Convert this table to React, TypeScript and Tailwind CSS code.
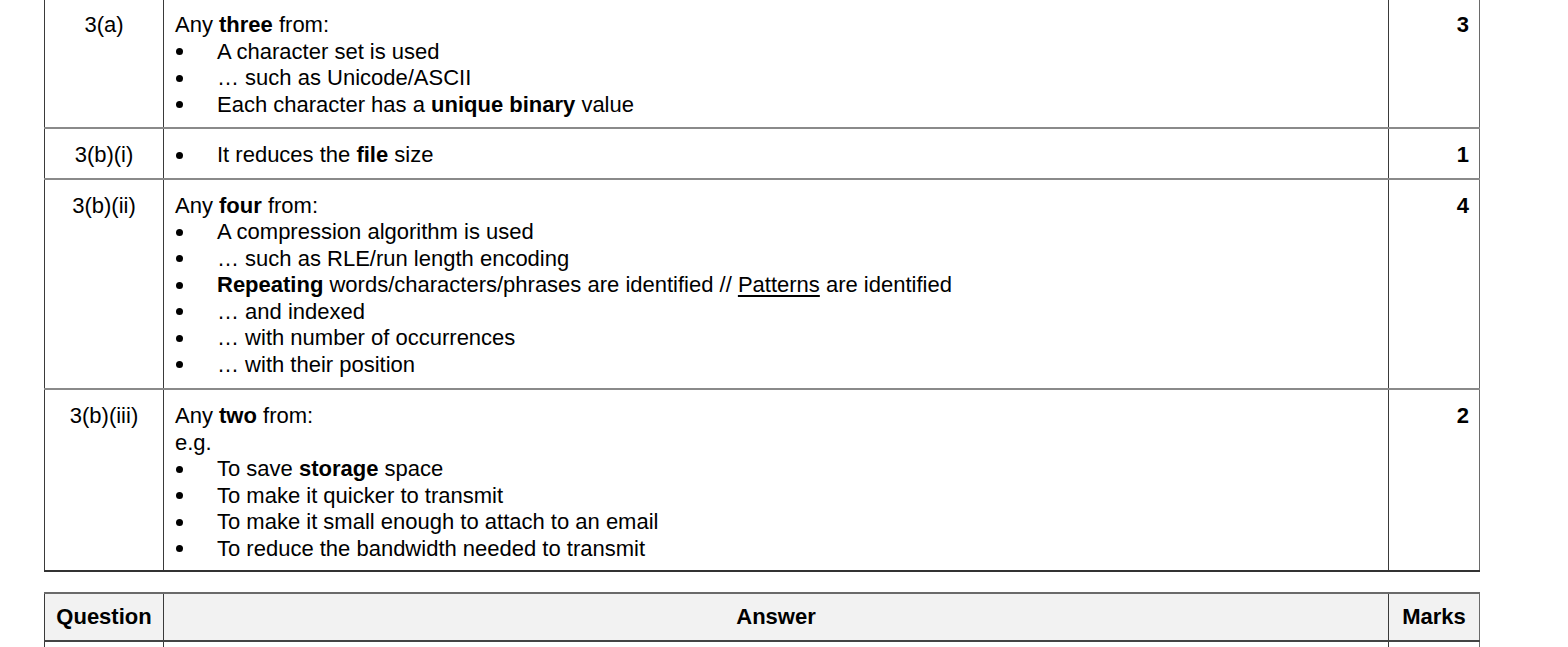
import type { ReactNode } from "react";

type Row = { q: string; marks: string; body: ReactNode; pb: string };

function Bullet({ children }: { children: ReactNode }) {
  return (
    <div className="flex">
      <span className="flex w-[42px] shrink-0 items-center pl-[1px]">
        <span className="block h-[7px] w-[7px] rounded-full bg-black" />
      </span>
      <span>{children}</span>
    </div>
  );
}

const rows: Row[] = [
  {
    q: "3(a)",
    marks: "3",
    pb: "pb-[9px]",
    body: (
      <>
        <div>
          Any <b>three</b> from:
        </div>
        <Bullet>A character set is used</Bullet>
        <Bullet>… such as Unicode/ASCII</Bullet>
        <Bullet>
          Each character has a <b>unique binary</b> value
        </Bullet>
      </>
    ),
  },
  {
    q: "3(b)(i)",
    marks: "1",
    pb: "pb-[9px]",
    body: (
      <Bullet>
        It reduces the <b>file</b> size
      </Bullet>
    ),
  },
  {
    q: "3(b)(ii)",
    marks: "4",
    pb: "pb-[10px]",
    body: (
      <>
        <div>
          Any <b>four</b> from:
        </div>
        <Bullet>A compression algorithm is used</Bullet>
        <Bullet>… such as RLE/run length encoding</Bullet>
        <Bullet>
          <b>Repeating</b> words/characters/phrases are identified // <u className="underline-offset-[3px]">Patterns</u> are identified
        </Bullet>
        <Bullet>… and indexed</Bullet>
        <Bullet>… with number of occurrences</Bullet>
        <Bullet>… with their position</Bullet>
      </>
    ),
  },
  {
    q: "3(b)(iii)",
    marks: "2",
    pb: "pb-[8px]",
    body: (
      <>
        <div>
          Any <b>two</b> from:
        </div>
        <div>e.g.</div>
        <Bullet>
          To save <b>storage</b> space
        </Bullet>
        <Bullet>To make it quicker to transmit</Bullet>
        <Bullet>To make it small enough to attach to an email</Bullet>
        <Bullet>To reduce the bandwidth needed to transmit</Bullet>
      </>
    ),
  },
];

export default function App() {
  return (
    <div className="h-[647px] overflow-hidden bg-white pl-[44px] font-['Liberation_Sans',Arial,sans-serif] text-[22px] leading-[26.5px] text-black">
      <div className="-mt-[3px] w-[1436px] border-t-2 border-[#8a8a8a]">
        {rows.map((r, i) => (
          <div
            key={r.q}
            className={`grid grid-cols-[120px_1225px_91px] border-b-2 ${
              i === rows.length - 1 ? "border-[#333]" : "border-[#8a8a8a]"
            }`}
          >
            <div className={`border-l border-r border-[#3a3a3a] pt-[13px] text-center ${r.pb}`}>{r.q}</div>
            <div className={`border-r border-[#3a3a3a] pt-[13px] pl-[11px] ${r.pb}`}>{r.body}</div>
            <div className={`border-r border-[#6a6a6a] pt-[13px] pr-[10px] text-right font-bold ${r.pb}`}>{r.marks}</div>
          </div>
        ))}
      </div>

      <div className="mt-[20px] w-[1436px] border-t-2 border-[#6a6a6a]">
        <div className="grid grid-cols-[120px_1225px_91px] border-b-2 border-[#444] bg-[#f2f2f2] font-bold">
          <div className="border-l border-r border-[#3a3a3a] pt-[10px] pb-[9px] text-center">Question</div>
          <div className="border-r border-[#3a3a3a] pt-[10px] pb-[9px] text-center">Answer</div>
          <div className="border-r border-[#6a6a6a] pt-[10px] pb-[9px] text-center">Marks</div>
        </div>
        <div className="grid h-[40px] grid-cols-[120px_1225px_91px]">
          <div className="border-l border-r border-[#3a3a3a]" />
          <div className="border-r border-[#3a3a3a]" />
          <div className="border-r border-[#6a6a6a]" />
        </div>
      </div>
    </div>
  );
}
